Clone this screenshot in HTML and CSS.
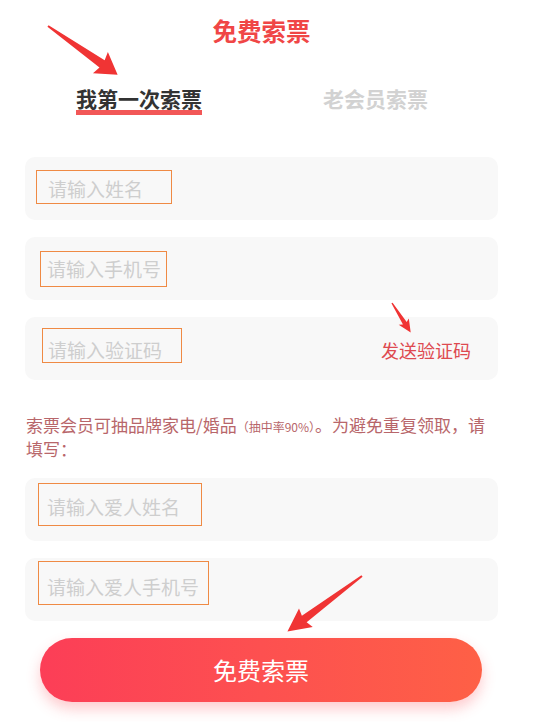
FILE: index.html
```html
<!DOCTYPE html>
<html lang="zh-CN">
<head>
<meta charset="utf-8">
<title>免费索票</title>
<link rel="stylesheet" href="styles.css">
</head>
<body>
<div class="page">
  <h1 class="title">免费索票</h1>
  <div class="tabs">
    <div class="tab tab-active">我第一次索票<span class="tab-bar"></span></div>
    <div class="tab tab-idle">老会员索票</div>
  </div>

  <div class="field">
    <span class="ph ph-1">请输入姓名</span>
  </div>
  <div class="field">
    <span class="ph ph-2">请输入手机号</span>
  </div>
  <div class="field">
    <span class="ph ph-3">请输入验证码</span>
    <span class="send">发送验证码</span>
  </div>

  <p class="note"><span>索票会员可抽品牌家电/婚品</span><small>（抽中率90%）</small><span>。为避免重复领取，请</span><br><span>填写：</span></p>

  <div class="field">
    <span class="ph ph-4">请输入爱人姓名</span>
  </div>
  <div class="field">
    <span class="ph ph-5">请输入爱人手机号</span>
  </div>

  <button class="submit">免费索票</button>

  <svg class="arrows" width="535" height="722" viewBox="0 0 535 722" aria-hidden="true">
    <polygon fill="#f03434" transform="translate(48 26) rotate(35)" points="0,-1 66,-4.5 64,-13 85,0 64,13 66,4.5 0,1"/>
    <polygon fill="#f03434" transform="translate(392 303) rotate(57.7)" points="0,-0.7 24,-2.2 22,-6 35,0 22,6 24,2.2 0,0.7"/>
    <polygon fill="#f03434" transform="translate(362 576) rotate(143.3)" points="0,-1 72,-4 70,-11.5 93,0 70,11.5 72,4 0,1"/>
  </svg>
</div>
</body>
</html>
```

FILE: styles.css
```css
* { box-sizing: border-box; }

html, body {
  margin: 0;
  padding: 0;
  background: #ffffff;
}

body {
  font-family: "Noto Sans CJK SC", "Noto Sans", sans-serif;
  width: 535px;
  height: 722px;
  overflow: hidden;
}

.page {
  position: relative;
  padding: 15px 37px 0 25px;
  height: 722px;
}

.title {
  margin: 0;
  text-align: center;
  font-size: 24.5px;
  line-height: 32px;
  font-weight: 700;
  color: #f04646;
}

.tabs {
  display: flex;
  margin-top: 38px;
  padding-left: 51px;
}

.tab {
  font-size: 21px;
  line-height: 26px;
  font-weight: 700;
  white-space: nowrap;
}

.tab-active {
  display: flex;
  flex-direction: column;
  color: #333333;
}

.tab-bar {
  display: block;
  height: 5px;
  margin-top: -1px;
  background: #f25757;
}

.tab-idle {
  margin-left: 121px;
  color: #d2d2d2;
}

.field {
  display: flex;
  align-items: flex-start;
  height: 63px;
  margin-top: 17px;
  background: #f8f8f8;
  border-radius: 10px;
}

.tabs + .field {
  margin-top: 42px;
}

.ph {
  display: flex;
  align-items: center;
  border: 1px solid #ef8a44;
  font-size: 19px;
  line-height: 24px;
  color: #cecece;
  white-space: nowrap;
}

.ph-1 { margin: 13px 0 0 11px; width: 136px; height: 34px; padding: 3px 0 0 11px; }
.ph-2 { margin: 14px 0 0 15px; width: 127px; height: 36px; padding: 0 0 0 6px; }
.ph-3 { margin: 11px 0 0 17px; width: 140px; height: 35px; padding: 8px 0 0 5px; }
.ph-4 { margin: 5px 0 0 13px; width: 164px; height: 43px; padding: 4px 0 0 8px; }
.ph-5 { margin: 3px 0 0 13px; width: 171px; height: 44px; padding: 8px 0 0 8px; }

.send {
  align-self: center;
  margin-left: auto;
  margin-right: 27px;
  padding-top: 2px;
  font-size: 18px;
  line-height: 24px;
  color: #de4a50;
}

.note {
  margin: 33px 0 0 1px;
  font-size: 17px;
  line-height: 24px;
  color: #b8666a;
  white-space: nowrap;
}

.note small {
  font-size: 12px;
  line-height: 1;
}

.note + .field {
  margin-top: 17px;
}

.submit {
  display: block;
  width: 442px;
  height: 64px;
  margin: 17px 0 0 15px;
  border: none;
  border-radius: 32px;
  background: linear-gradient(90deg, #fc3e57 0%, #fd5050 50%, #fe6046 100%);
  box-shadow: 0 7px 14px rgba(252, 70, 80, 0.28);
  color: #ffffff;
  font-family: "Noto Sans CJK SC", "Noto Sans", sans-serif;
  font-size: 24px;
  line-height: 32px;
  padding: 0;
}

.arrows {
  position: absolute;
  top: 0;
  left: 0;
  pointer-events: none;
}
```
